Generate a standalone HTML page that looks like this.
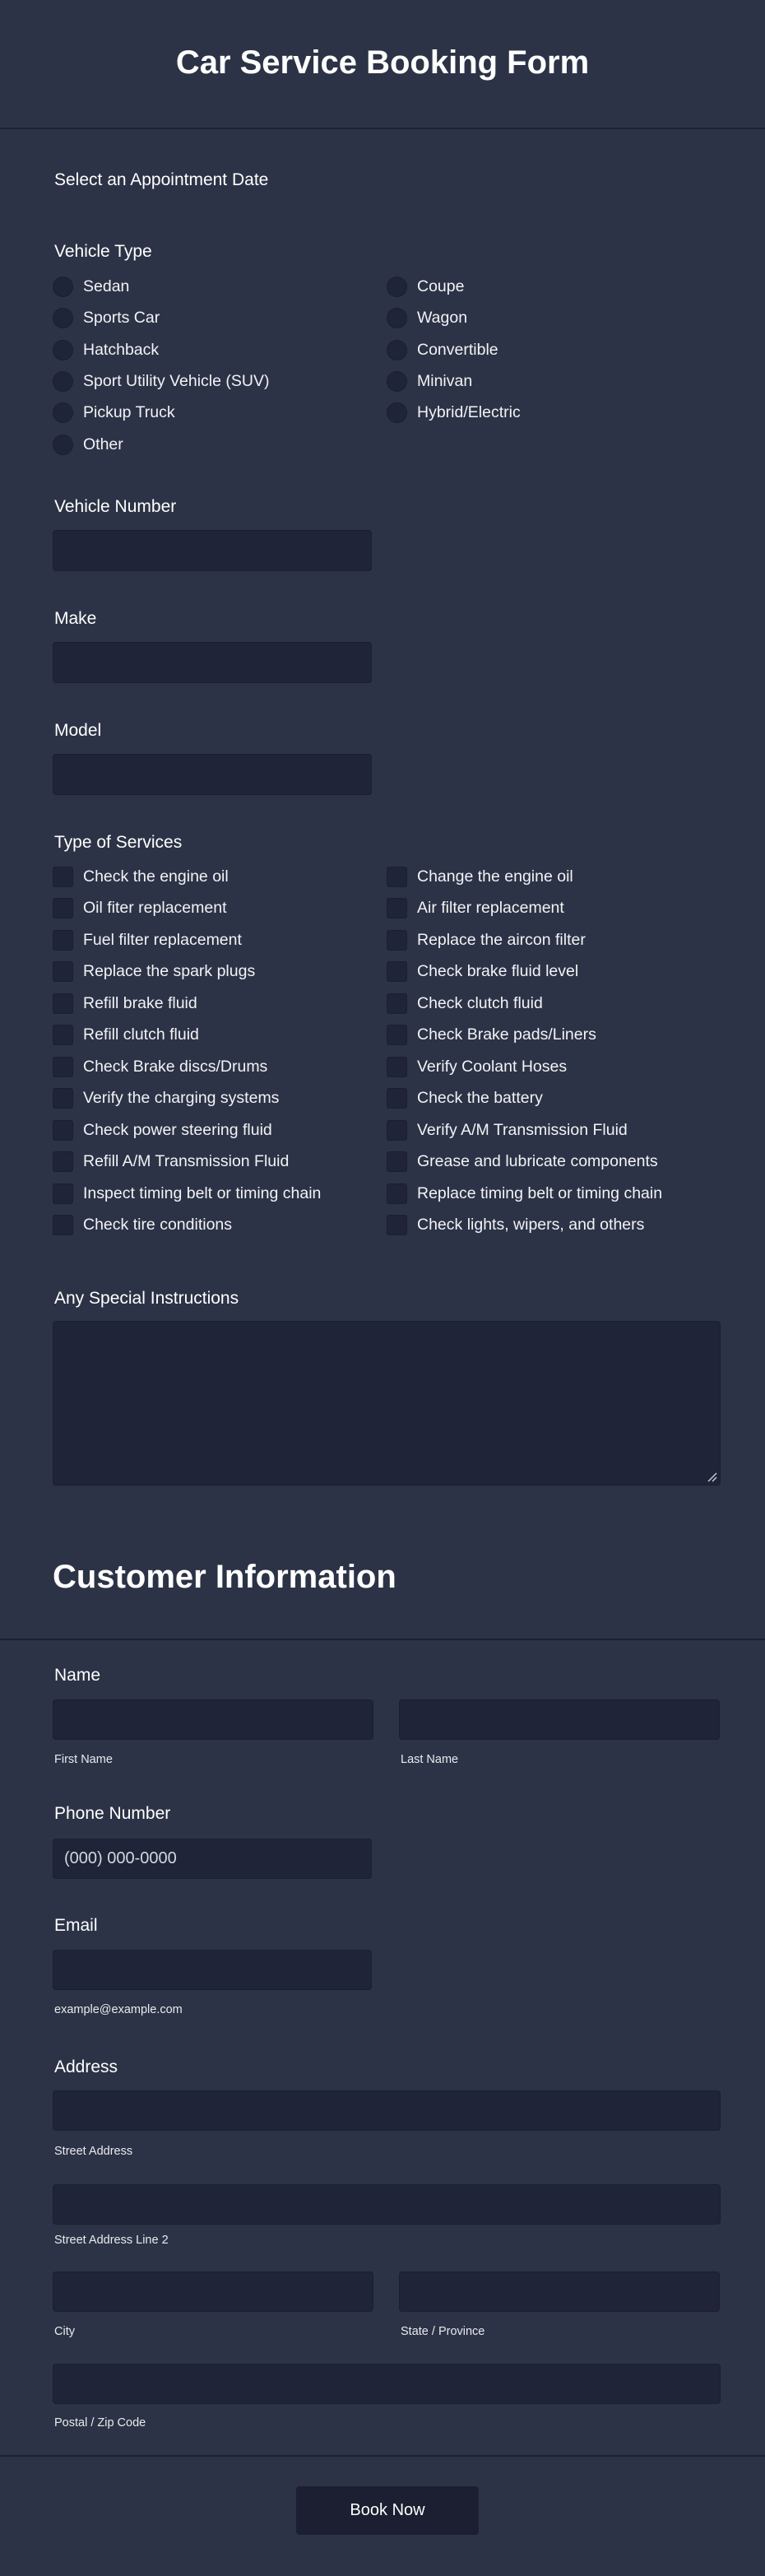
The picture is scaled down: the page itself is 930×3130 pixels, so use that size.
<!DOCTYPE html>
<html><head><meta charset="utf-8"><style>
*{margin:0;padding:0;box-sizing:border-box}
body{width:930px;height:3130px;background:#2d3346;font-family:"Liberation Sans",Arial,sans-serif;color:#fff;position:relative;overflow:hidden}
.a{position:absolute;white-space:nowrap}
.t{line-height:24px;height:24px}
.lbl{font-size:21px}
.opt{font-size:19.5px;color:#f2f3f6}
.sub{font-size:14.5px;color:#e8eaee;line-height:18px;height:18px}
.hr{position:absolute;left:0;width:930px;height:2px;background:#1d2130}
.in{position:absolute;background:#1f2438;border:1px solid #1b1f2f;border-radius:4px}
.rd{position:absolute;width:25px;height:25px;border-radius:50%;background:#1f2438;border:1px solid #1b1f2f}
.cb{position:absolute;width:25px;height:25px;border-radius:3px;background:#1f2438;border:1px solid #1b1f2f}
</style></head><body>
<div class="a" style="left:0;width:930px;text-align:center;top:52px;font-size:40px;font-weight:bold;line-height:48px">Car Service Booking Form</div>
<div class="hr" style="top:155px"></div>

<div class="a t lbl" style="left:66px;top:207px">Select an Appointment Date</div>
<div class="a t lbl" style="left:66px;top:294px">Vehicle Type</div>

<div class="rd" style="left:64px;top:336px"></div><div class="a t opt" style="left:101px;top:336px">Sedan</div>
<div class="rd" style="left:64px;top:374px"></div><div class="a t opt" style="left:101px;top:374px">Sports Car</div>
<div class="rd" style="left:64px;top:413px"></div><div class="a t opt" style="left:101px;top:413px">Hatchback</div>
<div class="rd" style="left:64px;top:451px"></div><div class="a t opt" style="left:101px;top:451px">Sport Utility Vehicle (SUV)</div>
<div class="rd" style="left:64px;top:489px"></div><div class="a t opt" style="left:101px;top:489px">Pickup Truck</div>
<div class="rd" style="left:64px;top:528px"></div><div class="a t opt" style="left:101px;top:528px">Other</div>
<div class="rd" style="left:470px;top:336px"></div><div class="a t opt" style="left:507px;top:336px">Coupe</div>
<div class="rd" style="left:470px;top:374px"></div><div class="a t opt" style="left:507px;top:374px">Wagon</div>
<div class="rd" style="left:470px;top:413px"></div><div class="a t opt" style="left:507px;top:413px">Convertible</div>
<div class="rd" style="left:470px;top:451px"></div><div class="a t opt" style="left:507px;top:451px">Minivan</div>
<div class="rd" style="left:470px;top:489px"></div><div class="a t opt" style="left:507px;top:489px">Hybrid/Electric</div>

<div class="a t lbl" style="left:66px;top:604px">Vehicle Number</div>
<div class="in" style="left:64px;top:644px;width:388px;height:50px"></div>
<div class="a t lbl" style="left:66px;top:740px">Make</div>
<div class="in" style="left:64px;top:780px;width:388px;height:50px"></div>
<div class="a t lbl" style="left:66px;top:876px">Model</div>
<div class="in" style="left:64px;top:916px;width:388px;height:50px"></div>

<div class="a t lbl" style="left:66px;top:1012px">Type of Services</div>
<div id="svc"></div>

<div class="a t lbl" style="left:66px;top:1566px">Any Special Instructions</div>
<div class="in" style="left:64px;top:1605px;width:812px;height:200px"></div>
<svg class="a" style="left:860px;top:1789px" width="12" height="12"><path d="M1 11L11 1M6 11L11 6" stroke="#c8cbd3" stroke-width="1.5"/></svg>

<div class="a" style="left:64px;top:1892px;font-size:40px;font-weight:bold;line-height:48px">Customer Information</div>
<div class="hr" style="top:1991px"></div>

<div class="a t lbl" style="left:66px;top:2024px">Name</div>
<div class="in" style="left:64px;top:2065px;width:390px;height:49px"></div>
<div class="in" style="left:485px;top:2065px;width:390px;height:49px"></div>
<div class="a sub" style="left:66px;top:2129px">First Name</div>
<div class="a sub" style="left:487px;top:2129px">Last Name</div>

<div class="a t lbl" style="left:66px;top:2192px">Phone Number</div>
<div class="in" style="left:64px;top:2234px;width:388px;height:49px"></div>
<div class="a t" style="left:78px;top:2246px;font-size:20px;color:#d4d7de">(000) 000-0000</div>

<div class="a t lbl" style="left:66px;top:2328px">Email</div>
<div class="in" style="left:64px;top:2369px;width:388px;height:49px"></div>
<div class="a sub" style="left:66px;top:2433px">example@example.com</div>

<div class="a t lbl" style="left:66px;top:2500px">Address</div>
<div class="in" style="left:64px;top:2540px;width:812px;height:49px"></div>
<div class="a sub" style="left:66px;top:2605px">Street Address</div>
<div class="in" style="left:64px;top:2654px;width:812px;height:49px"></div>
<div class="a sub" style="left:66px;top:2713px">Street Address Line 2</div>
<div class="in" style="left:64px;top:2760px;width:390px;height:49px"></div>
<div class="in" style="left:485px;top:2760px;width:390px;height:49px"></div>
<div class="a sub" style="left:66px;top:2824px">City</div>
<div class="a sub" style="left:487px;top:2824px">State / Province</div>
<div class="in" style="left:64px;top:2872px;width:812px;height:49px"></div>
<div class="a sub" style="left:66px;top:2935px">Postal / Zip Code</div>

<div class="hr" style="top:2983px"></div>
<div class="a" style="left:360px;top:3021px;width:222px;height:59px;background:#1b1f31;border-radius:4px;text-align:center;line-height:59px;font-size:20px">Book Now</div>

<script>
var L=["Check the engine oil","Oil fiter replacement","Fuel filter replacement","Replace the spark plugs","Refill brake fluid","Refill clutch fluid","Check Brake discs/Drums","Verify the charging systems","Check power steering fluid","Refill A/M Transmission Fluid","Inspect timing belt or timing chain","Check tire conditions"];
var R=["Change the engine oil","Air filter replacement","Replace the aircon filter","Check brake fluid level","Check clutch fluid","Check Brake pads/Liners","Verify Coolant Hoses","Check the battery","Verify A/M Transmission Fluid","Grease and lubricate components","Replace timing belt or timing chain","Check lights, wipers, and others"];
var h="";
for(var i=0;i<12;i++){var c=Math.round(1065+i*38.45);var t=c-12;
h+='<div class="cb" style="left:64px;top:'+(t)+'px"></div><div class="a t opt" style="left:101px;top:'+t+'px">'+L[i]+'</div>';
h+='<div class="cb" style="left:470px;top:'+(t)+'px"></div><div class="a t opt" style="left:507px;top:'+t+'px">'+R[i]+'</div>';}
document.getElementById("svc").innerHTML=h;
</script>
</body></html>
